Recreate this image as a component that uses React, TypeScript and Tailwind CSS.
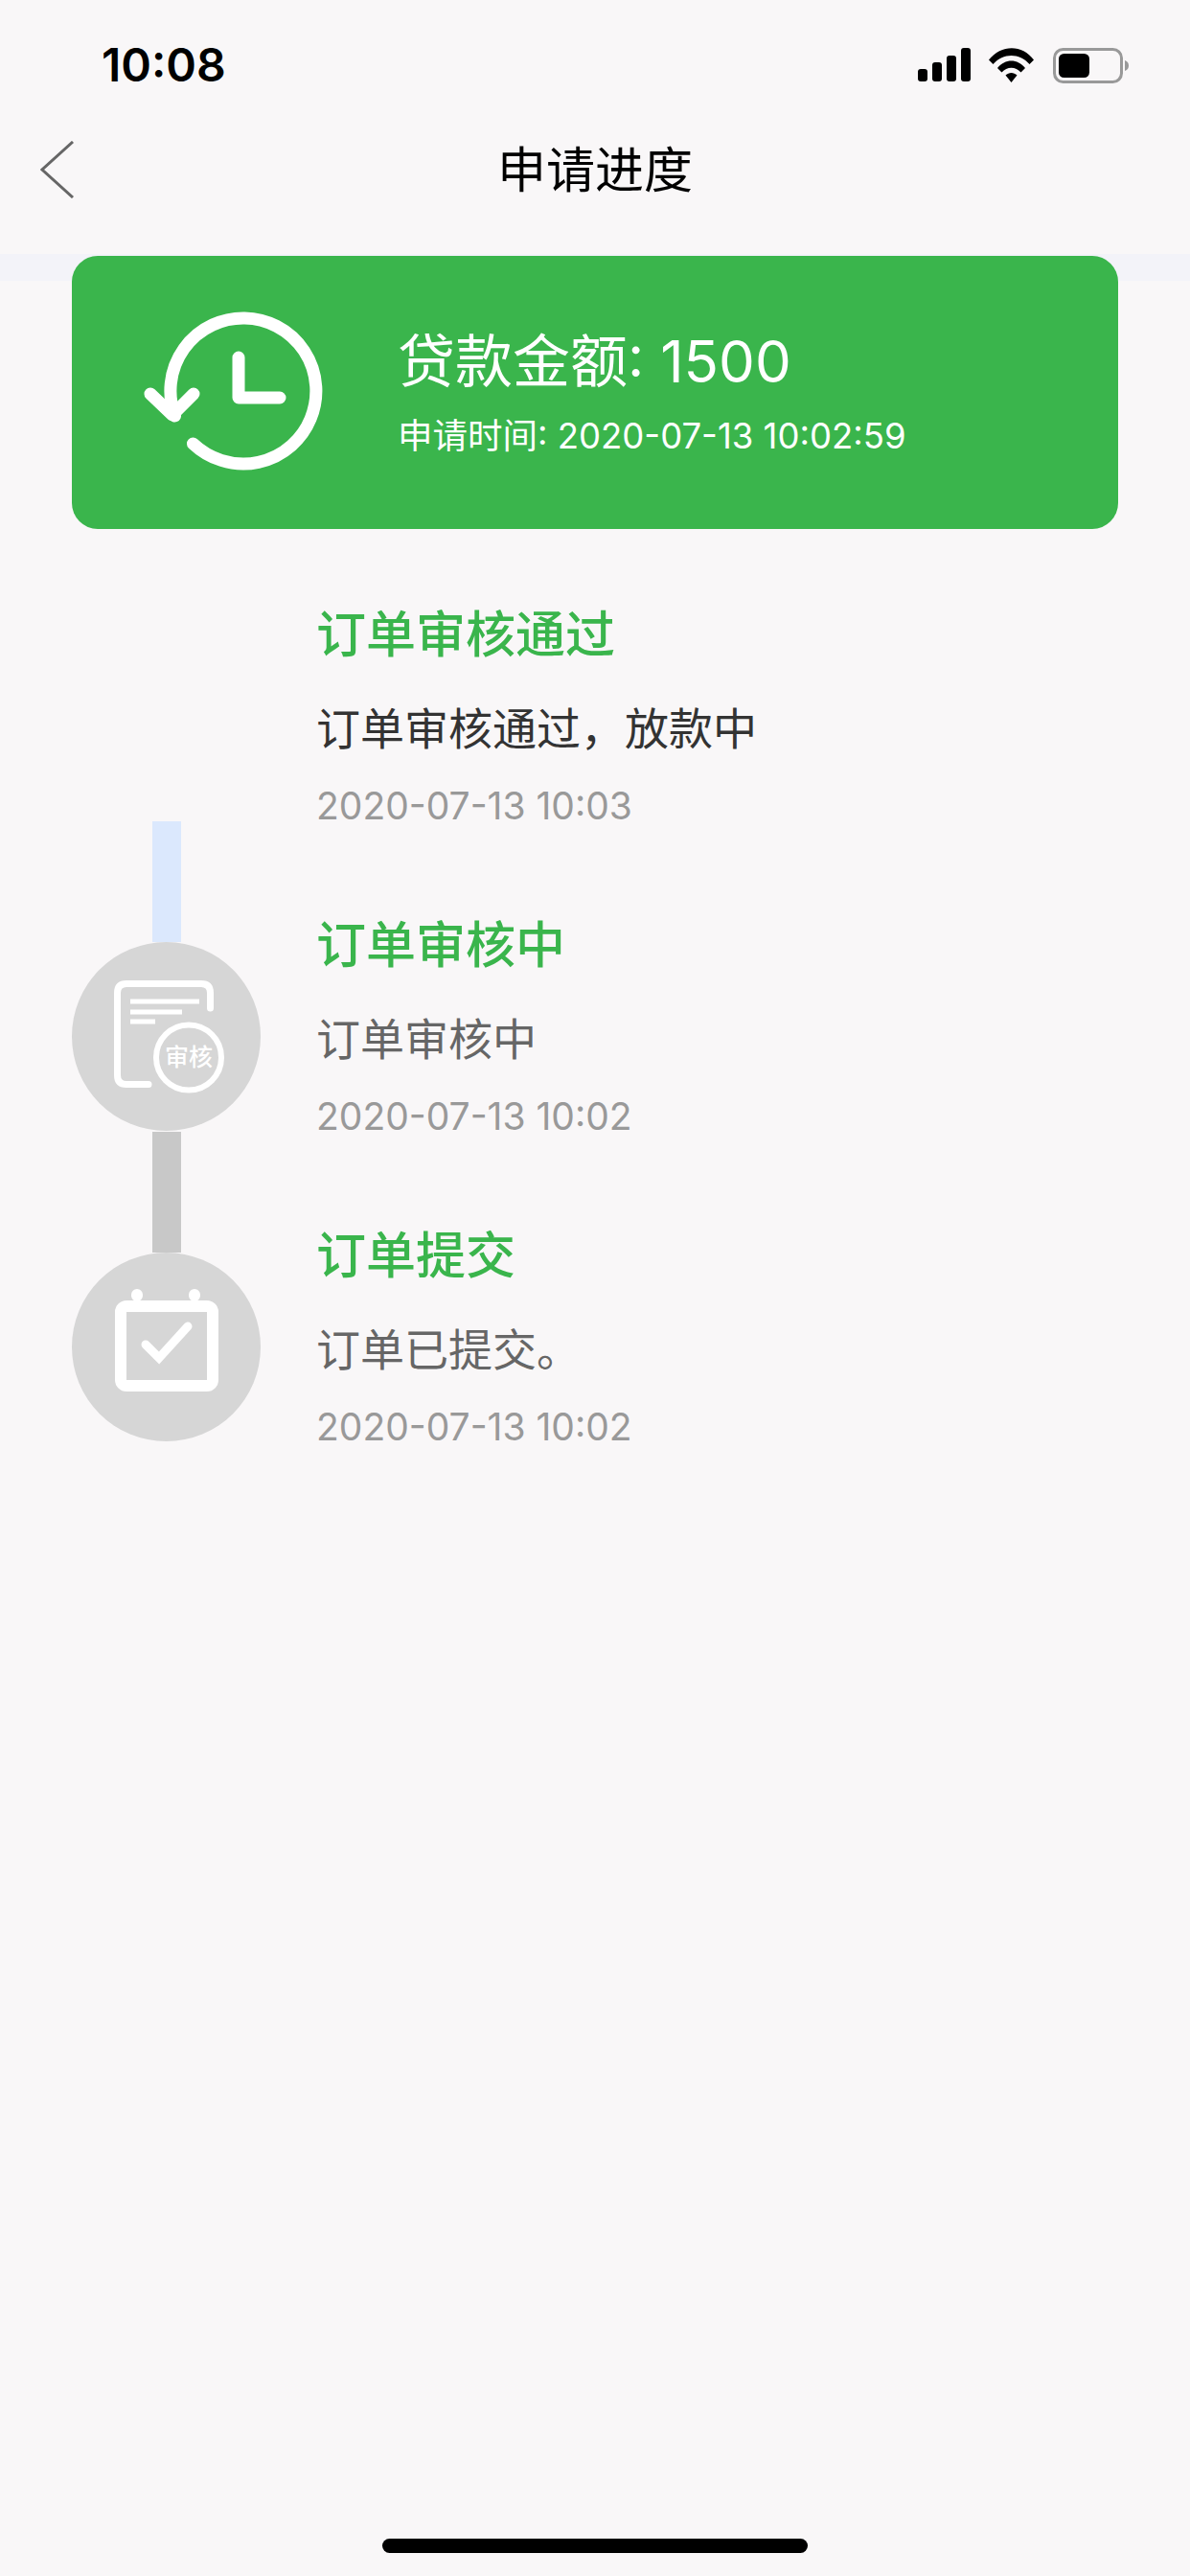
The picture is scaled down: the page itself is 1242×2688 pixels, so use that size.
const CJK = "font-['Inter','Noto_Sans_CJK_SC',sans-serif]";

function Signal() {
  return (
    <svg width="56" height="36" viewBox="958 50 56 36" fill="#000">
      <rect x="958" y="72" width="10" height="13" rx="3" />
      <rect x="973" y="65" width="10" height="20" rx="3" />
      <rect x="988" y="58" width="10" height="27" rx="3" />
      <rect x="1003" y="50" width="10" height="35" rx="3" />
    </svg>
  );
}

function Wifi() {
  return (
    <svg width="48" height="36" viewBox="1032 49 48 36" fill="#000">
      <path d="M1032 61.5 C1045 45 1067 45 1079 61.5 L1074.5 66 C1064 54 1047 54 1036.5 66 Z" />
      <path d="M1041 70 C1049 60 1062 60 1070 70 L1065.5 74.5 C1060 68 1051 68 1045.5 74.5 Z" />
      <path d="M1049.5 77.5 C1053 74 1058 74 1061.5 77.5 L1055.5 85 Z" />
    </svg>
  );
}

function Battery() {
  return (
    <svg width="80" height="37" viewBox="1097 49 80 37">
      <rect x="1099.5" y="50.5" width="70" height="34" rx="9" fill="none" stroke="#999" strokeWidth="3" />
      <rect x="1104" y="55" width="32" height="25" rx="5.5" fill="#000" />
      <path d="M1173 62 C1176 63 1177 65 1177 67.5 C1177 70 1176 72 1173 73 Z" fill="#999" />
    </svg>
  );
}

function Chevron() {
  return (
    <svg width="36" height="60" viewBox="42 138 36 60" fill="none" stroke="#666" strokeWidth="3">
      <path d="M76 139 L44 168 L76 197" />
    </svg>
  );
}

function HistoryIcon() {
  return (
    <svg width="190" height="170" viewBox="150 325 190 170" fill="none" stroke="#fff" strokeWidth="13" strokeLinecap="round" strokeLinejoin="round" className="h-[170px] w-[190px] shrink-0">
      <path d="M182.5 434 A76 76 0 1 1 201.5 463" />
      <path d="M157 411 L180 433 L202 411" />
      <path d="M249 373 L249 415 L292 415" />
    </svg>
  );
}

function ReviewIcon() {
  return (
    <svg viewBox="75 983 197 197" className="h-[197px] w-[197px]" fill="none" stroke="#fff">
      <path d="M219.5 1052 L219.5 1036 Q219.5 1026.5 210 1026.5 L132 1026.5 Q122.5 1026.5 122.5 1036 L122.5 1122 Q122.5 1131.5 132 1131.5 L155 1131.5" strokeWidth="7" strokeLinecap="round" />
      <path d="M136 1045 H208 M136 1056 H190 M136 1066 H162" strokeWidth="5" />
      <circle cx="197" cy="1103.5" r="34" strokeWidth="6" />
      <text x="197" y="1112" textAnchor="middle" fontSize="25" fontWeight="500" fill="#fff" stroke="none" fontFamily="'Noto Sans CJK SC', sans-serif">审核</text>
    </svg>
  );
}

function CalendarIcon() {
  return (
    <svg viewBox="75 1307 197 197" className="h-[197px] w-[197px]" fill="none" stroke="#fff" strokeLinecap="round">
      <path d="M143 1352 V1351 M203 1352 V1351" strokeWidth="12" />
      <rect x="126" y="1363" width="96" height="83" rx="6" strokeWidth="12" strokeLinecap="butt" />
      <path d="M152 1403 L166 1417 L196 1384" strokeWidth="9" strokeLinejoin="miter" />
    </svg>
  );
}

type Step = {
  title: string;
  body: string;
  date: string;
  bodyClass: string;
  lineClass?: string;
  icon?: React.ReactNode;
};

const steps: Step[] = [
  { title: "订单审核通过", body: "订单审核通过，放款中", date: "2020-07-13 10:03", bodyClass: "text-[#333333]" },
  { title: "订单审核中", body: "订单审核中", date: "2020-07-13 10:02", bodyClass: "text-[#666666]", lineClass: "bg-[#dbe8fd]", icon: <ReviewIcon /> },
  { title: "订单提交", body: "订单已提交。", date: "2020-07-13 10:02", bodyClass: "text-[#666666]", lineClass: "bg-[#c8c8c8]", icon: <CalendarIcon /> },
];

function StepRow({ step }: { step: Step }) {
  return (
    <div className="flex h-[324px]">
      <div className="flex w-[197px] flex-col items-center">
        {step.icon && (
          <>
            <div className={`h-[126px] w-[30px] ${step.lineClass}`} />
            <div className="h-[197px] w-[197px] rounded-full bg-[#d6d6d6]">{step.icon}</div>
          </>
        )}
      </div>
      <div className="ml-[58px] flex flex-col pt-[100px]">
        <div className="h-[60px] text-[52px] leading-[60px] font-medium text-[#3ab54c]">{step.title}</div>
        <div className={`mt-[37px] h-[60px] text-[46px] leading-[60px] ${step.bodyClass}`}>{step.body}</div>
        <div className="mt-[26px] h-[50px] text-[39px] leading-[50px] text-[#999999]">{step.date}</div>
      </div>
    </div>
  );
}

export default function App() {
  return (
    <div className={`flex h-[2688px] w-[1242px] flex-col overflow-hidden bg-[#f9f7f8] ${CJK}`}>
      <div className="flex h-[136px] items-center justify-between pr-[64px] pl-[106px]">
        <span className="text-[48px] leading-none font-semibold text-black">10:08</span>
        <div className="flex items-center gap-[18px]">
          <Signal />
          <Wifi />
          <Battery />
        </div>
      </div>
      <div className="grid h-[82px] grid-cols-[1fr_auto_1fr] items-center pl-[42px]">
        <Chevron />
        <div className="mr-[42px] text-[51px] leading-none text-black">申请进度</div>
        <div />
      </div>
      <div className="h-[47px]" />
      <div className="h-[28px] bg-[#f3f3f9]" />
      <div className="mx-[75px] -mt-[26px] flex h-[285px] items-center rounded-[27px] bg-[#3ab54c] pl-[75px] text-white">
        <HistoryIcon />
        <div className="ml-[75px] flex flex-col">
          <div className="text-[60px] leading-[70px]">贷款金额: 1500</div>
          <div className="mt-[21px] text-[36.5px] leading-[44px]">申请时间: 2020-07-13 10:02:59</div>
        </div>
      </div>
      <div className="mx-[75px] -mt-[19px] flex flex-col">
        {steps.map((s) => (
          <StepRow key={s.title} step={s} />
        ))}
      </div>
      <div className="flex-1" />
      <div className="mx-auto mb-[24px] h-[15px] w-[444px] rounded-full bg-black" />
    </div>
  );
}
